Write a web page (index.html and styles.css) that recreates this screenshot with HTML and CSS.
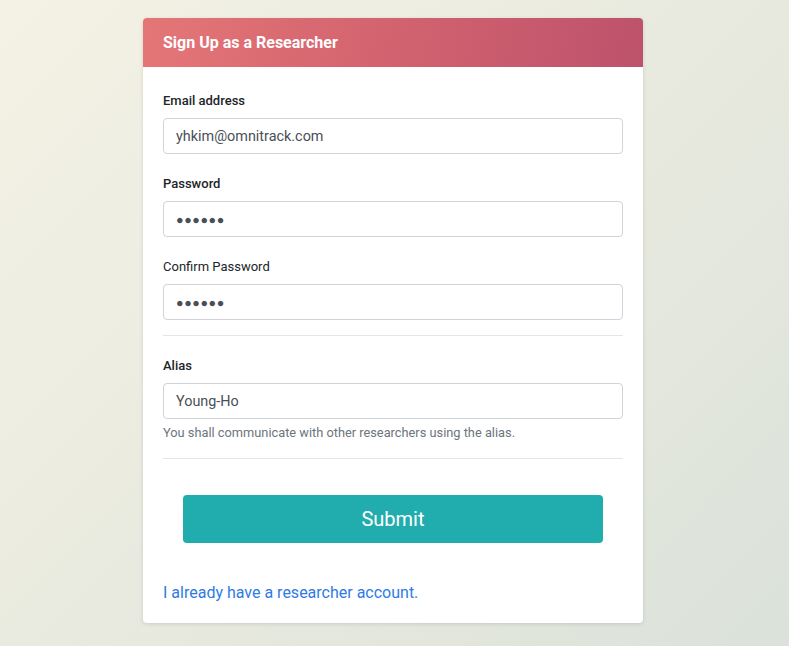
FILE: index.html
```html
<!DOCTYPE html>
<html lang="en">
<head>
<meta charset="utf-8">
<title>Sign Up as a Researcher</title>
<link rel="stylesheet" href="styles.css">
</head>
<body>
<main class="page">
  <section class="card">
    <header class="card-header">Sign Up as a Researcher</header>
    <form class="card-body">
      <div class="group">
        <label class="label strong">Email address</label>
        <div class="input">yhkim@omnitrack.com</div>
      </div>
      <div class="group">
        <label class="label strong">Password</label>
        <div class="input dots">&#9679;&#9679;&#9679;&#9679;&#9679;&#9679;</div>
      </div>
      <div class="group last">
        <label class="label">Confirm Password</label>
        <div class="input dots">&#9679;&#9679;&#9679;&#9679;&#9679;&#9679;</div>
      </div>
      <hr class="rule">
      <div class="group alias">
        <label class="label strong">Alias</label>
        <div class="input">Young-Ho</div>
        <p class="help">You shall communicate with other researchers using the alias.</p>
      </div>
      <hr class="rule">
      <div class="actions">
        <button type="button" class="submit">Submit</button>
      </div>
      <a class="link" href="#">I already have a researcher account.</a>
    </form>
  </section>
</main>
</body>
</html>
```

FILE: styles.css
```css
* { box-sizing: border-box; }
html, body { height: 100%; }
body {
  margin: 0;
  font-family: Roboto, "Noto Sans", Arial, sans-serif;
  background: linear-gradient(135deg, #f4f2e5 0%, #e9eadf 50%, #dbe2da 100%);
  color: #212529;
}
.page {
  display: flex;
  justify-content: center;
  padding-top: 18px;
}
.card {
  width: 500px;
  margin-right: 3px;
  background: #fff;
  border-radius: 4px;
  box-shadow: 0 1px 4px rgba(0,0,0,0.12);
  overflow: hidden;
}
.card-header {
  height: 49px;
  padding: 0 20px;
  display: flex;
  align-items: center;
  color: #fff;
  font-weight: 700;
  font-size: 16px;
  background: linear-gradient(100deg, #e57677 0%, #d4646f 45%, #bd526c 100%);
}
.card-body {
  padding: 24px 20px 18px;
  display: flex;
  flex-direction: column;
}
.group {
  display: flex;
  flex-direction: column;
  margin-bottom: 20px;
}
.group.last { margin-bottom: 15px; }
.group.alias { margin-bottom: 16px; }
.label {
  font-size: 13px;
  line-height: 19.5px;
  margin-bottom: 7.5px;
  color: #212529;
}
.label.strong { font-weight: 500; }
.input {
  height: 36px;
  border: 1px solid #ced4da;
  border-radius: 4px;
  padding: 0 12px;
  display: flex;
  align-items: center;
  font-size: 14.4px;
  color: #495057;
}
.input.dots {
  font-size: 12.5px;
  letter-spacing: 0.6px;
  color: #4a4f55;
}
.help {
  margin: 5px 0 0;
  font-size: 12.8px;
  line-height: 18px;
  color: #6c757d;
}
.rule {
  margin: 0 0 20px;
  border: 0;
  border-top: 1px solid #e5e5e5;
}
.alias + .rule { margin-bottom: 36px; }
.actions {
  display: flex;
  justify-content: center;
  margin-bottom: 38px;
}
.submit {
  width: 420px;
  height: 48px;
  border: 0;
  border-radius: 4px;
  background: #21adad;
  color: #fff;
  font-family: inherit;
  font-size: 20px;
}
.link {
  font-size: 16px;
  line-height: 24px;
  color: #2f7be5;
  text-decoration: none;
}
```
